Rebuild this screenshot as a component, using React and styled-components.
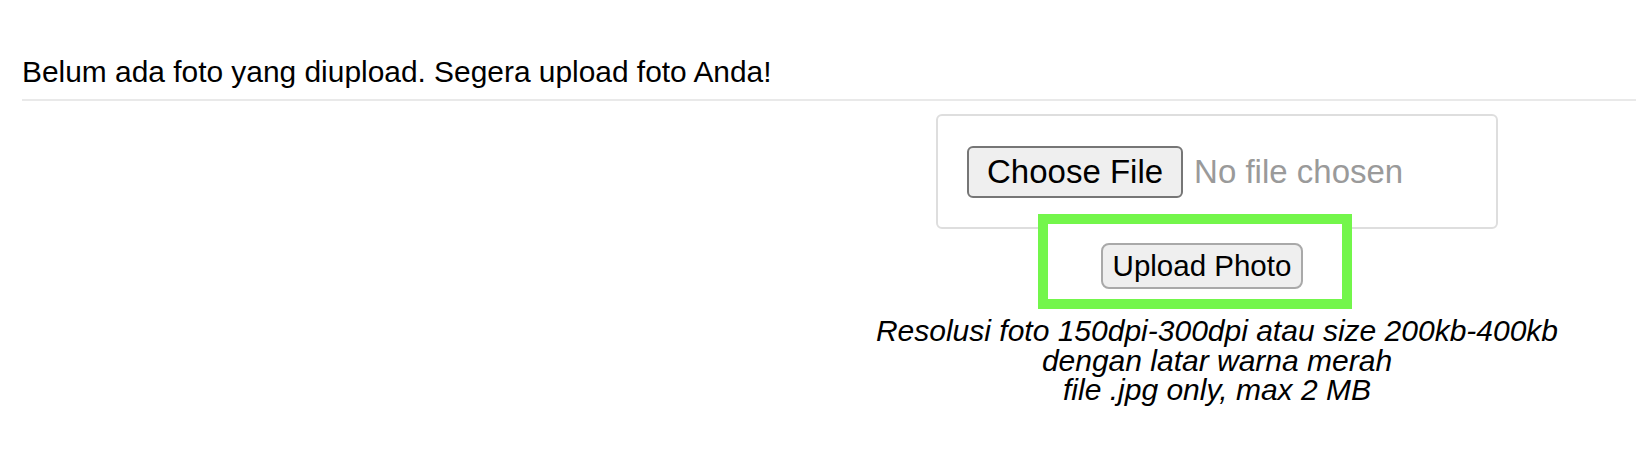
import styled, { createGlobalStyle } from 'styled-components';

const Global = createGlobalStyle`
  html, body {
    margin: 0;
    padding: 0;
    background: #ffffff;
  }
  body {
    font-family: "Liberation Sans", Arial, sans-serif;
    color: #000000;
  }
`;

export default function App(){
    return (
        <Principal>
            <Global/>
            <Judul>Belum ada foto yang diupload. Segera upload foto Anda!</Judul>
            <Garis/>
            <Baris>
                <Kolom>
                    <KotakFile>
                        <TombolFile type="button">Choose File</TombolFile>
                        <NamaFile>No file chosen</NamaFile>
                    </KotakFile>
                    <Sorotan>
                        <TombolUpload type="button">Upload Photo</TombolUpload>
                    </Sorotan>
                    <Catatan>
                        <Baris1>Resolusi foto 150dpi-300dpi atau size 200kb-400kb</Baris1>
                        <Baris1>dengan latar warna merah</Baris1>
                        <Baris1>file .jpg only, max 2 MB</Baris1>
                    </Catatan>
                </Kolom>
            </Baris>
        </Principal>
    );
}

const Principal = styled.div`
    width: 100%;
    min-height: 450px;
    padding: 56px 0 0 22px;
    box-sizing: border-box;
`;

const Judul = styled.p`
    margin: 0;
    font-size: 29.9px;
    line-height: 32px;
    font-weight: normal;
`;

const Garis = styled.div`
    height: 2px;
    background: #e9e9e9;
    margin-top: 11px;
`;

const Baris = styled.div`
    display: flex;
    justify-content: flex-start;
    padding-left: 845px;
    padding-top: 13px;
`;

const Kolom = styled.div`
    width: 700px;
    display: flex;
    flex-direction: column;
    align-items: center;
`;

const KotakFile = styled.div`
    width: 562px;
    height: 115px;
    box-sizing: border-box;
    border: 2px solid #dedede;
    border-radius: 6px;
    display: flex;
    align-items: center;
    padding-left: 29px;
    gap: 11px;
`;

const TombolFile = styled.button`
    height: 52px;
    padding: 0 18px;
    background: #efefef;
    border: 2px solid #767676;
    border-radius: 6px;
    font-family: "Liberation Sans", Arial, sans-serif;
    font-size: 33px;
    color: #000000;
`;

const NamaFile = styled.span`
    font-size: 33px;
    color: #9a9a9a;
`;

const Sorotan = styled.div`
    position: relative;
    margin-top: -15px;
    margin-right: 44px;
    width: 314px;
    height: 95px;
    box-sizing: border-box;
    border: 10px solid #73f64b;
    background: #ffffff;
    display: flex;
    justify-content: center;
    padding: 19px 0 0 14px;
`;

const TombolUpload = styled.button`
    height: 46px;
    padding: 0 10px;
    background: #efefef;
    border: 2px solid #a9a9a9;
    border-radius: 8px;
    font-family: "Liberation Sans", Arial, sans-serif;
    font-size: 29.5px;
    color: #000000;
`;

const Catatan = styled.div`
    margin-top: 7px;
    display: flex;
    flex-direction: column;
    align-items: center;
`;

const Baris1 = styled.span`
    display: block;
    font-size: 30px;
    font-style: italic;
    line-height: 29.7px;
    text-align: center;
    white-space: nowrap;
`;
